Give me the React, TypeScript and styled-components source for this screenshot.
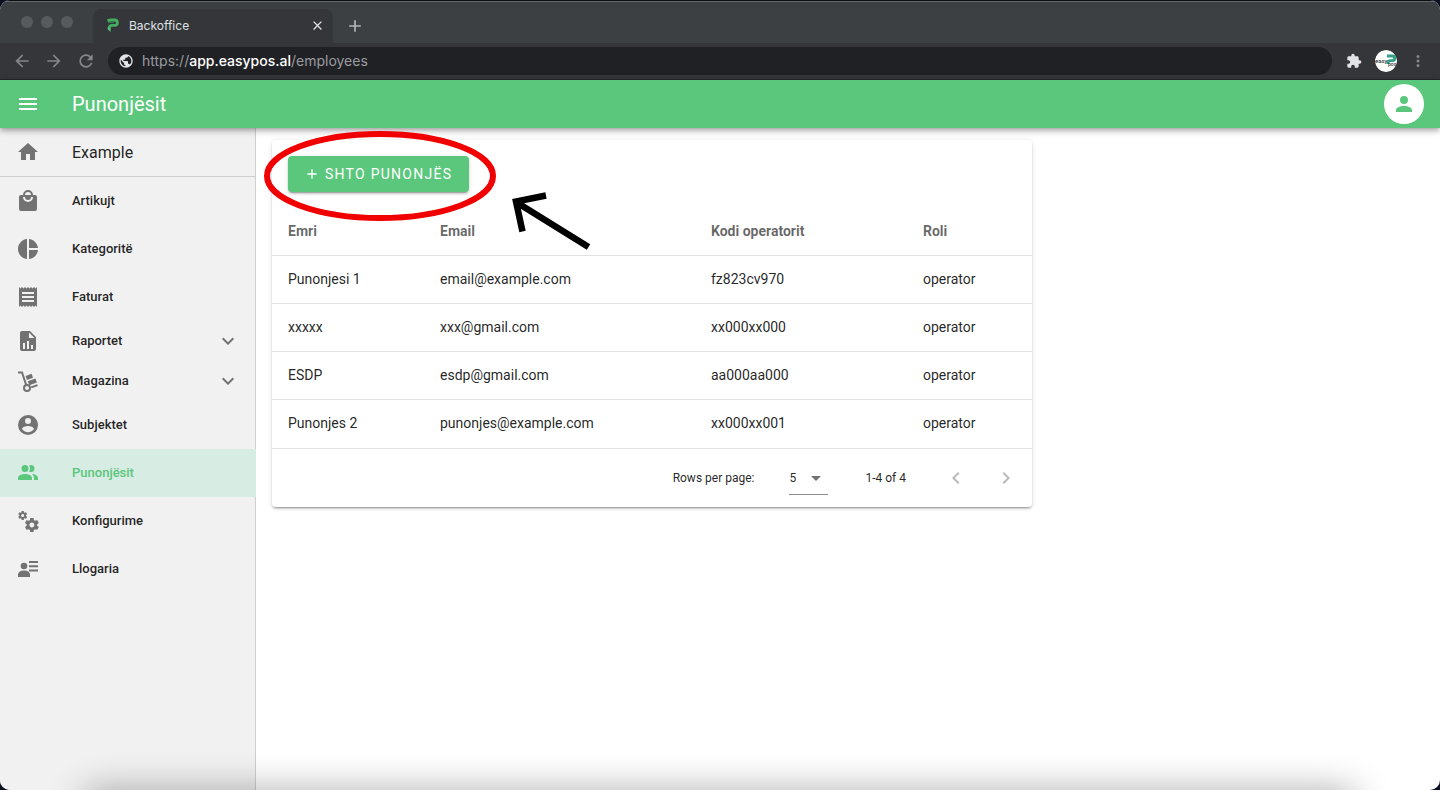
import React from "react";
import styled, { createGlobalStyle, css } from "styled-components";

const GREEN = "#5bc77c";
const ICON_GREY = "#727272";

const GlobalStyle = createGlobalStyle`
  *, *::before, *::after { box-sizing: border-box; }
  body { margin: 0; background: #0b1022; font-family: Roboto, "Liberation Sans", sans-serif; color: rgba(0, 0, 0, 0.87); }
  button { font: inherit; color: inherit; border: 0; background: none; padding: 0; cursor: pointer; }
  a { color: inherit; text-decoration: none; }
  svg { flex: none; }
`;

const Window = styled.div`
  position: relative;
  min-height: 100vh;
  display: flex;
  flex-direction: column;
  overflow: hidden;
  border-radius: 10px;
  background: #fff;

  &::after {
    content: "";
    position: absolute;
    left: 84px;
    right: 84px;
    bottom: -40px;
    height: 40px;
    border-radius: 12px;
    box-shadow: 0 0 36px rgba(0, 0, 0, 0.32);
    pointer-events: none;
  }
`;

/* ---------- browser frame ---------- */

const TabStrip = styled.div`
  display: flex;
  height: 43px;
  background: #3c4043;
  border-top: 1px solid #0c0d0e;
  box-shadow: inset 0 1px 0 #66696c;
  padding-left: 21px;
`;

const Lights = styled.div`
  display: flex;
  gap: 8px;
  padding-top: 15px;
  width: 72px;
`;

const Light = styled.span`
  width: 12px;
  height: 12px;
  border-radius: 50%;
  background: #585b5e;
`;

const Tab = styled.div`
  display: flex;
  align-items: center;
  width: 240px;
  margin-top: 8px;
  padding: 0 8px 2px 14px;
  border-radius: 8px 8px 0 0;
  background: #35363a;
  color: #dfe1e5;
  font-family: Inter, sans-serif;
  font-size: 12px;
`;

const TabTitle = styled.span`
  flex: 1;
  padding-left: 10px;
`;

const ChromeButton = styled.button<{ $dim?: boolean }>`
  display: flex;
  align-items: center;
  justify-content: center;
  width: 16px;
  height: 16px;
  color: ${(p) => (p.$dim ? "#85878a" : "#e1e3e6")};
`;

const NewTab = styled(ChromeButton)`
  width: 20px;
  height: 20px;
  margin: 15px 0 0 12px;
  color: #b4b6b9;
`;

const Toolbar = styled.div`
  display: flex;
  align-items: center;
  height: 37px;
  padding: 0 14px 1px;
  gap: 14px;
  background: #35363a;
  border-bottom: 1px solid #26272b;
`;

const ToolGroup = styled.div<{ $gap: number }>`
  display: flex;
  align-items: center;
  gap: ${(p) => p.$gap}px;
`;

const Address = styled.div`
  flex: 1;
  display: flex;
  align-items: center;
  height: 28px;
  padding: 0 10px;
  gap: 8px;
  border-radius: 14px;
  background: #202124;
  color: #9a9ca0;
  font-family: Inter, sans-serif;
  font-size: 14px;

  b { font-weight: 500; color: #fff; }
`;

const Profile = styled(ChromeButton)`
  width: 22px;
  height: 22px;
  border-radius: 50%;
  overflow: hidden;
`;

/* ---------- application ---------- */

const AppBar = styled.header`
  position: relative;
  z-index: 2;
  display: flex;
  align-items: center;
  height: 48px;
  padding: 0 16px;
  background: ${GREEN};
  color: #fff;
  box-shadow: 0 2px 4px -1px rgba(0, 0, 0, 0.2), 0 4px 5px rgba(0, 0, 0, 0.14), 0 1px 10px rgba(0, 0, 0, 0.12);
`;

const MenuButton = styled.button`
  display: flex;
`;

const Title = styled.h1`
  flex: 1;
  margin: 0;
  padding-left: 32px;
  font-size: 20px;
  font-weight: 400;
  line-height: 30px;
`;

const Avatar = styled.button`
  display: flex;
  align-items: center;
  justify-content: center;
  width: 40px;
  height: 40px;
  border-radius: 50%;
  background: #fff;
  color: ${GREEN};
`;

const Body = styled.div`
  flex: 1;
  display: flex;
`;

const Sidebar = styled.nav`
  flex: none;
  width: 256px;
  background: #f1f1f1;
  box-shadow: inset -1px 0 0 #cfcfcf;
`;

const NavLabel = styled.span`
  flex: 1;
  padding-bottom: 2px;
`;

const navRow = css<{ $active?: boolean }>`
  display: flex;
  align-items: center;
  width: 100%;
  height: 48px;
  padding: 0 16px;
  gap: 32px;
  font-size: 13px;
  font-weight: 500;
  text-align: left;
  background: ${(p) => (p.$active ? "#d7ece2" : "transparent")};
  color: ${(p) => (p.$active ? GREEN : "rgba(0, 0, 0, 0.87)")};

  svg { color: ${(p) => (p.$active ? GREEN : ICON_GREY)}; }
`;

const NavLink = styled.a`${navRow}`;

const NavGroup = styled.button`
  ${navRow}
  height: 40px;
`;

const Brand = styled.a`
  ${navRow}
  height: 49px;
  border-bottom: 1px solid #cfcfcf;
  font-size: 16px;
  font-weight: 400;
`;

const Main = styled.main`
  position: relative;
  flex: 1;
  min-width: 0;
  padding: 12px 16px;
`;

const Card = styled.section`
  max-width: 760px;
  border-radius: 4px;
  background: #fff;
  box-shadow: 0 3px 1px -2px rgba(0, 0, 0, 0.2), 0 2px 2px rgba(0, 0, 0, 0.14), 0 1px 5px rgba(0, 0, 0, 0.12);
`;

const CardActions = styled.div`
  padding: 16px;
`;

const AddButton = styled.button`
  display: flex;
  align-items: center;
  height: 36px;
  padding: 0 17px 0 16px;
  gap: 5px;
  border-radius: 4px;
  background: ${GREEN};
  color: #fff;
  font-size: 14px;
  letter-spacing: 0.09em;
  text-transform: uppercase;
  box-shadow: 0 3px 1px -2px rgba(0, 0, 0, 0.2), 0 2px 2px rgba(0, 0, 0, 0.14), 0 1px 5px rgba(0, 0, 0, 0.12);
`;

const Table = styled.table`
  width: 100%;
  border-collapse: separate;
  border-spacing: 0;
  table-layout: fixed;
  font-size: 14px;

  th, td {
    height: 48px;
    padding: 0 16px 2px;
    text-align: left;
    border-bottom: 1px solid #e0e0e0;
  }
  th { font-weight: 700; color: rgba(0, 0, 0, 0.6); }
  tbody tr:last-child td { border-bottom: 0; }
`;

const Col = styled.col<{ $width?: number }>`
  width: ${(p) => (p.$width ? `${p.$width}px` : "auto")};
`;

const Footer = styled.div`
  display: flex;
  align-items: center;
  justify-content: flex-end;
  height: 59px;
  padding-right: 14px;
  border-top: 1px solid #e0e0e0;
  font-size: 12px;
`;

const PageSize = styled.label`
  display: flex;
  align-items: center;
  gap: 35px;
`;

const SelectBox = styled.span`
  position: relative;
  display: flex;
  width: 39px;
  border-bottom: 1px solid #8c8c8c;

  svg { position: absolute; right: 0; top: 4px; color: ${ICON_GREY}; pointer-events: none; }
`;

const Select = styled.select`
  width: 100%;
  height: 32px;
  padding: 0;
  border: 0;
  appearance: none;
  background: none;
  font: inherit;
  color: inherit;
`;

const Range = styled.span`
  padding: 0 38px 0 37px;
`;

const Pager = styled.div`
  display: flex;
  gap: 26px;
  color: #b9b9b9;

  button { display: flex; color: inherit; }
`;

const Annotation = styled.svg`
  position: absolute;
  z-index: 3;
  left: 0;
  top: 0;
  pointer-events: none;
`;

/* ---------- icons ---------- */

const Icon = ({ d, size = 24, children }: { d?: string; size?: number; children?: React.ReactNode }) => (
  <svg width={size} height={size} viewBox="0 0 24 24" fill="currentColor" aria-hidden="true">
    {d && <path d={d} />}
    {children}
  </svg>
);

const paths = {
  back: "M20,11V13H8L13.5,18.5L12.08,19.92L4.16,12L12.08,4.08L13.5,5.5L8,11H20Z",
  forward: "M4,11V13H16L10.5,18.5L11.92,19.92L19.84,12L11.92,4.08L10.5,5.5L16,11H4Z",
  reload: "M17.65,6.35C16.2,4.9 14.21,4 12,4A8,8 0 0,0 4,12A8,8 0 0,0 12,20C15.73,20 18.84,17.45 19.73,14H17.65C16.83,16.33 14.61,18 12,18A6,6 0 0,1 6,12A6,6 0 0,1 12,6C13.66,6 15.14,6.69 16.22,7.78L13,11H20V4L17.65,6.35Z",
  globe: "M12 2C6.48 2 2 6.48 2 12s4.48 10 10 10 10-4.48 10-10S17.52 2 12 2zm-1 17.93c-3.95-.49-7-3.85-7-7.93 0-.62.08-1.21.21-1.79L9 15v1c0 1.1.9 2 2 2v1.93zm6.9-2.54c-.26-.81-1-1.39-1.9-1.39h-1v-3c0-.55-.45-1-1-1H8v-2h2c.55 0 1-.45 1-1V7h2c1.1 0 2-.9 2-2v-.41c2.93 1.19 5 4.06 5 7.41 0 2.08-.8 3.97-2.1 5.39z",
  puzzle: "M20.5 11H19V7c0-1.1-.9-2-2-2h-4V3.5C13 2.12 11.88 1 10.5 1S8 2.12 8 3.5V5H4c-1.1 0-1.99.9-1.99 2v3.8H3.5c1.49 0 2.7 1.21 2.7 2.7s-1.21 2.7-2.7 2.7H2V20c0 1.1.9 2 2 2h3.8v-1.5c0-1.49 1.21-2.7 2.7-2.7 1.49 0 2.7 1.21 2.7 2.7V22H17c1.1 0 2-.9 2-2v-4h1.5c1.38 0 2.5-1.12 2.5-2.5S21.88 11 20.5 11z",
  dots: "M12,16A2,2 0 0,1 14,18A2,2 0 0,1 12,20A2,2 0 0,1 10,18A2,2 0 0,1 12,16M12,10A2,2 0 0,1 14,12A2,2 0 0,1 12,14A2,2 0 0,1 10,12A2,2 0 0,1 12,10M12,4A2,2 0 0,1 14,6A2,2 0 0,1 12,8A2,2 0 0,1 10,6A2,2 0 0,1 12,4Z",
  close: "M19,6.41L17.59,5L12,10.59L6.41,5L5,6.41L10.59,12L5,17.59L6.41,19L12,13.41L17.59,19L19,17.59L13.41,12L19,6.41Z",
  plus: "M19,13H13V19H11V13H5V11H11V5H13V11H19V13Z",
  menu: "M3,6H21V8H3V6M3,11H21V13H3V11M3,16H21V18H3V16Z",
  account: "M12,4A4,4 0 0,1 16,8A4,4 0 0,1 12,12A4,4 0 0,1 8,8A4,4 0 0,1 12,4M12,14C16.42,14 20,15.79 20,18V20H4V18C4,15.79 7.58,14 12,14Z",
  home: "M10,20V14H14V20H19V12H22L12,3L2,12H5V20H10Z",
  shopping: "M12,13A5,5 0 0,1 7,8H9A3,3 0 0,0 12,11A3,3 0 0,0 15,8H17A5,5 0 0,1 12,13M12,3A3,3 0 0,1 15,6H9A3,3 0 0,1 12,3M19,6H17A5,5 0 0,0 12,1A5,5 0 0,0 7,6H5C3.89,6 3,6.89 3,8V20A2,2 0 0,0 5,22H19A2,2 0 0,0 21,20V8C21,6.89 20.1,6 19,6Z",
  pie: "M11,2V22C5.9,21.5 2,17.2 2,12C2,6.8 5.9,2.5 11,2M13,2V11H22C21.5,6.2 17.8,2.5 13,2M13,13V22C17.7,21.5 21.5,17.8 22,13H13Z",
  receipt: "M18 17H6v-2h12v2zm0-4H6v-2h12v2zm0-4H6V7h12v2zM3 22l1.5-1.5L6 22l1.5-1.5L9 22l1.5-1.5L12 22l1.5-1.5L15 22l1.5-1.5L18 22l1.5-1.5L21 22V2l-1.5 1.5L18 2l-1.5 1.5L15 2l-1.5 1.5L12 2l-1.5 1.5L9 2 7.5 3.5 6 2 4.5 3.5 3 2v20z",
  report: "M13,9H18.5L13,3.5V9M6,2H14L20,8V20A2,2 0 0,1 18,22H6C4.89,22 4,21.1 4,20V4C4,2.89 4.89,2 6,2M7,20H9V14H7V20M11,20H13V12H11V20M15,20H17V16H15V20Z",
  subject: "M12,19.2C9.5,19.2 7.29,17.92 6,16C6.03,14 10,12.9 12,12.9C14,12.9 17.97,14 18,16C16.71,17.92 14.5,19.2 12,19.2M12,5A3,3 0 0,1 15,8A3,3 0 0,1 12,11A3,3 0 0,1 9,8A3,3 0 0,1 12,5M12,2A10,10 0 0,0 2,12A10,10 0 0,0 12,22A10,10 0 0,0 22,12C22,6.47 17.5,2 12,2Z",
  people: "M16 17V19H2V17S2 13 9 13 16 17 16 17M12.5 7.5A3.5 3.5 0 1 0 9 11A3.5 3.5 0 0 0 12.5 7.5M15.94 13A5.32 5.32 0 0 1 18 17V19H22V17S22 13.37 15.94 13M15 4A3.39 3.39 0 0 0 13.07 4.59A5 5 0 0 1 13.07 10.41A3.39 3.39 0 0 0 15 11A3.5 3.5 0 0 0 15 4Z",
  cogs: "M15.9,18.45C17.25,18.45 18.35,17.35 18.35,16C18.35,14.65 17.25,13.55 15.9,13.55C14.54,13.55 13.45,14.65 13.45,16C13.45,17.35 14.54,18.45 15.9,18.45M21.1,16.68L22.58,17.84C22.71,17.95 22.75,18.13 22.66,18.29L21.26,20.71C21.17,20.86 21,20.92 20.83,20.86L19.09,20.16C18.73,20.44 18.33,20.67 17.91,20.85L17.64,22.7C17.62,22.87 17.47,23 17.3,23H14.5C14.32,23 14.18,22.87 14.15,22.7L13.89,20.85C13.46,20.67 13.07,20.44 12.71,20.16L10.96,20.86C10.81,20.92 10.62,20.86 10.54,20.71L9.14,18.29C9.05,18.13 9.09,17.95 9.22,17.84L10.7,16.68L10.65,16L10.7,15.31L9.22,14.16C9.09,14.05 9.05,13.86 9.14,13.71L10.54,11.29C10.62,11.13 10.81,11.07 10.96,11.13L12.71,11.84C13.07,11.56 13.46,11.32 13.89,11.15L14.15,9.29C14.18,9.13 14.32,9 14.5,9H17.3C17.47,9 17.62,9.13 17.64,9.29L17.91,11.15C18.33,11.32 18.73,11.56 19.09,11.84L20.83,11.13C21,11.07 21.17,11.13 21.26,11.29L22.66,13.71C22.75,13.86 22.71,14.05 22.58,14.16L21.1,15.31L21.15,16L21.1,16.68M6.69,8.07C7.56,8.07 8.26,7.37 8.26,6.5C8.26,5.63 7.56,4.92 6.69,4.92A1.58,1.58 0 0,0 5.11,6.5C5.11,7.37 5.82,8.07 6.69,8.07M10.03,6.94L11,7.68C11.07,7.75 11.09,7.87 11.03,7.97L10.13,9.53C10.08,9.63 9.96,9.67 9.86,9.63L8.74,9.18L8,9.62L7.81,10.81C7.79,10.92 7.7,11 7.59,11H5.79C5.67,11 5.58,10.92 5.56,10.81L5.4,9.62L4.64,9.18L3.52,9.63C3.41,9.67 3.3,9.63 3.24,9.53L2.34,7.97C2.28,7.87 2.31,7.75 2.39,7.68L3.34,6.94L3.31,6.5L3.34,6.06L2.39,5.32C2.31,5.25 2.28,5.13 2.34,5.03L3.24,3.47C3.3,3.37 3.41,3.32 3.52,3.37L4.63,3.82L5.4,3.38L5.56,2.19C5.58,2.08 5.67,2 5.79,2H7.59C7.7,2 7.79,2.08 7.81,2.19L8,3.38L8.74,3.82L9.86,3.37C9.96,3.32 10.08,3.37 10.13,3.47L11.03,5.03C11.09,5.13 11.07,5.25 11,5.32L10.03,6.06L10.06,6.5L10.03,6.94Z",
  chevronDown: "M7.41,8.58L12,13.17L16.59,8.58L18,10L12,16L6,10L7.41,8.58Z",
  chevronLeft: "M15.41,16.58L10.83,12L15.41,7.41L14,6L8,12L14,18L15.41,16.58Z",
  chevronRight: "M8.59,16.58L13.17,12L8.59,7.41L10,6L16,12L10,18L8.59,16.58Z",
  caret: "M7,10L12,15L17,10H7Z",
  contact: "M8 5.7a3.3 3.3 0 1 1 0 6.6a3.3 3.3 0 0 1 0-6.6M8 13.5c4 0 6 1.7 6 4V20H2v-2.500c0-2.300 2-4 6-4M13 4h9v2h-9zM13 8.300h9v2h-9zM13 12.600h9v2h-9z",
};

const DollyIcon = () => (
  <Icon>
    <path d="M2 3.500h4l4.200 12.500" fill="none" stroke="currentColor" strokeWidth="2" />
    <circle cx="11" cy="19" r="3" fill="none" stroke="currentColor" strokeWidth="2" />
    <path d="M9.600 7l6-2.200l1.400 3.900l-6 2.200zM11.800 12.200l7.600-2.800l1.500 4.100l-7.600 2.800zM14.900 17.500l6.300-2.300l.6 1.700l-6.300 2.300z" />
  </Icon>
);

const LogoIcon = () => (
  <svg width="12" height="14" viewBox="0 0 12 14" aria-hidden="true">
    <path d="M.5 2.800C2 1.900 3.500 2 5 2h2.800c3.400 0 3.400 5.300 0 5.300H5.200C3 7.300 2 8.600 2.200 10.500" fill="none" stroke="#45ad62" strokeWidth="2.800" />
    <path d="M1 4.500h6" fill="none" stroke="#2c7a45" strokeWidth="1.200" />
    <path d="M.8 9.500h2.900L3.500 14L.8 11.300z" fill="#55c274" />
  </svg>
);

const ProfileIcon = () => (
  <svg width="22" height="22" viewBox="0 0 22 22" role="img" aria-label="easypos">
    <circle cx="11" cy="11" r="11" fill="#fff" />
    <path d="M12 6h5.500c3 0 3 4.700 0 4.700h-2.500c-1.600 0-2 .8-2 3.300" fill="none" stroke="#2ea084" strokeWidth="2.800" />
    <text x="0" y="13" fontFamily="Roboto, sans-serif" fontSize="6" fontWeight="500" fill="#333">easy</text>
    <text x="13" y="16" fontFamily="Roboto, sans-serif" fontSize="5" fontWeight="500" fill="#333">pos</text>
  </svg>
);

/* ---------- data ---------- */

const employees = [
  ["Punonjesi 1", "email@example.com", "fz823cv970"],
  ["xxxxx", "xxx@gmail.com", "xx000xx000"],
  ["ESDP", "esdp@gmail.com", "aa000aa000"],
  ["Punonjes 2", "punonjes@example.com", "xx000xx001"],
];

export default function App() {
  return (
    <>
      <GlobalStyle />
      <Window>
        <TabStrip>
          <Lights><Light /><Light /><Light /></Lights>
          <Tab>
            <LogoIcon />
            <TabTitle>Backoffice</TabTitle>
            <ChromeButton aria-label="Close tab"><Icon d={paths.close} size={15} /></ChromeButton>
          </Tab>
          <NewTab aria-label="New tab"><Icon d={paths.plus} size={20} /></NewTab>
        </TabStrip>
        <Toolbar>
          <ToolGroup $gap={16}>
            <ChromeButton $dim aria-label="Back"><Icon d={paths.back} size={20} /></ChromeButton>
            <ChromeButton $dim aria-label="Forward"><Icon d={paths.forward} size={20} /></ChromeButton>
            <ChromeButton $dim aria-label="Reload"><Icon d={paths.reload} size={20} /></ChromeButton>
          </ToolGroup>
          <Address>
            <ChromeButton aria-label="Site information"><Icon d={paths.globe} size={16} /></ChromeButton>
            <span>https://<b>app.easypos.al</b>/employees</span>
          </Address>
          <ToolGroup $gap={13}>
            <ChromeButton aria-label="Extensions"><Icon d={paths.puzzle} size={16} /></ChromeButton>
            <Profile aria-label="Profile"><ProfileIcon /></Profile>
            <ChromeButton $dim aria-label="Browser menu"><Icon d={paths.dots} size={18} /></ChromeButton>
          </ToolGroup>
        </Toolbar>

        <AppBar>
          <MenuButton aria-label="Menu"><Icon d={paths.menu} /></MenuButton>
          <Title>Punonjësit</Title>
          <Avatar aria-label="Account"><Icon d={paths.account} /></Avatar>
        </AppBar>

        <Body>
          <Sidebar>
            <Brand href="#home"><Icon d={paths.home} />Example</Brand>
            <NavLink href="#artikujt"><Icon d={paths.shopping} /><NavLabel>Artikujt</NavLabel></NavLink>
            <NavLink href="#kategorite"><Icon d={paths.pie} /><NavLabel>Kategoritë</NavLabel></NavLink>
            <NavLink href="#faturat"><Icon d={paths.receipt} /><NavLabel>Faturat</NavLabel></NavLink>
            <NavGroup><Icon d={paths.report} /><NavLabel>Raportet</NavLabel><Icon d={paths.chevronDown} /></NavGroup>
            <NavGroup><DollyIcon /><NavLabel>Magazina</NavLabel><Icon d={paths.chevronDown} /></NavGroup>
            <NavLink href="#subjektet"><Icon d={paths.subject} /><NavLabel>Subjektet</NavLabel></NavLink>
            <NavLink href="#punonjesit" $active><Icon d={paths.people} /><NavLabel>Punonjësit</NavLabel></NavLink>
            <NavLink href="#konfigurime"><Icon d={paths.cogs} /><NavLabel>Konfigurime</NavLabel></NavLink>
            <NavLink href="#llogaria"><Icon d={paths.contact} /><NavLabel>Llogaria</NavLabel></NavLink>
          </Sidebar>

          <Main>
            <Card>
              <CardActions>
                <AddButton><Icon d={paths.plus} size={16} />Shto punonjës</AddButton>
              </CardActions>
              <Table>
                <colgroup><Col $width={152} /><Col $width={271} /><Col $width={212} /><Col /></colgroup>
                <thead>
                  <tr><th>Emri</th><th>Email</th><th>Kodi operatorit</th><th>Roli</th></tr>
                </thead>
                <tbody>
                  {employees.map(([name, email, code]) => (
                    <tr key={name}><td>{name}</td><td>{email}</td><td>{code}</td><td>operator</td></tr>
                  ))}
                </tbody>
              </Table>
              <Footer>
                <PageSize>
                  Rows per page:
                  <SelectBox>
                    <Select defaultValue="5"><option>5</option><option>10</option><option>15</option></Select>
                    <Icon d={paths.caret} />
                  </SelectBox>
                </PageSize>
                <Range>1-4 of 4</Range>
                <Pager>
                  <button aria-label="Previous page" disabled><Icon d={paths.chevronLeft} /></button>
                  <button aria-label="Next page" disabled><Icon d={paths.chevronRight} /></button>
                </Pager>
              </Footer>
            </Card>
            <Annotation width="360" height="130" viewBox="0 0 360 130" aria-hidden="true">
              <ellipse cx="124" cy="48" rx="113" ry="42" fill="none" stroke="#f00000" strokeWidth="6" />
              <path d="M332.500 119L260 74M290 67.500L260 73.500L266.500 103.500" fill="none" stroke="#000" strokeWidth="6.500" />
            </Annotation>
          </Main>
        </Body>
      </Window>
    </>
  );
}
